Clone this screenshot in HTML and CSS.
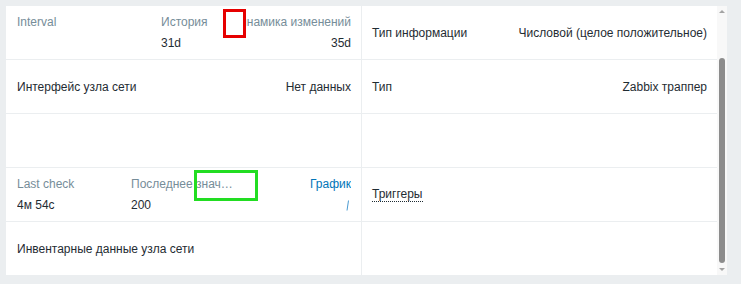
FILE: index.html
```html
<!DOCTYPE html>
<html lang="ru">
<head>
<meta charset="UTF-8">
<meta name="viewport" content="width=device-width, initial-scale=1.0">
<title>Элемент данных</title>
<link rel="stylesheet" href="styles.css">
</head>
<body>
<div class="panel">
    <!-- Таблица свойств элемента -->
    <div class="grid">
        <div class="cell cell-left">
            <div class="trio trio-history">
                <div class="stack">
                    <span class="label">Interval</span>
                    <span class="value">&nbsp;</span>
                </div>
                <div class="stack">
                    <span class="label">История</span>
                    <span class="value">31d</span>
                </div>
                <div class="stack stack-right">
                    <span class="label">Динамика изменений</span>
                    <span class="value">35d</span>
                </div>
            </div>
        </div>
        <div class="cell cell-right pair">
            <span class="value">Тип информации</span>
            <span class="value">Числовой (целое положительное)</span>
        </div>

        <div class="cell cell-left pair">
            <span class="value">Интерфейс узла сети</span>
            <span class="value">Нет данных</span>
        </div>
        <div class="cell cell-right pair">
            <span class="value">Тип</span>
            <span class="value">Zabbix траппер</span>
        </div>

        <div class="cell cell-left"></div>
        <div class="cell cell-right"></div>

        <div class="cell cell-left">
            <div class="trio trio-last">
                <div class="stack">
                    <span class="label">Last check</span>
                    <span class="value">4м 54с</span>
                </div>
                <div class="stack">
                    <span class="label ellipsis">Последнее значение</span>
                    <span class="value">200</span>
                </div>
                <div class="stack stack-right">
                    <a class="link" href="#">График</a>
                    <svg class="spark" width="4" height="11" viewBox="0 0 4 11">
                        <line x1="1" y1="10.5" x2="2.5" y2="0.5" stroke="#4a9ad0" stroke-width="1"/>
                    </svg>
                </div>
            </div>
        </div>
        <div class="cell cell-right pair">
            <span class="value dotted">Триггеры</span>
        </div>

        <div class="cell cell-left pair last">
            <span class="value">Инвентарные данные узла сети</span>
        </div>
        <div class="cell cell-right last"></div>
    </div>

    <!-- Полоса прокрутки -->
    <div class="scrollbar">
        <div class="scroll-btn scroll-up"></div>
        <div class="scroll-gap"></div>
        <div class="scroll-thumb"></div>
        <div class="scroll-rest"></div>
        <div class="scroll-btn scroll-down"></div>
    </div>
</div>

<!-- Пометки поверх скриншота -->
<div class="mark mark-red"></div>
<div class="mark mark-green"></div>
</body>
</html>
```

FILE: styles.css
```css
/* Общие стили */
body {
    margin: 0;
    background-color: #ebeef0;
    font-family: "Liberation Sans", Arial, sans-serif;
    font-size: 12px;
    color: #1f2c33;
}
.panel {
    display: flex;
    width: 721px;
    height: 269px;
    margin: 6px 0 0 6px;
    background-color: #ffffff;
}
/* Таблица */
.grid {
    display: grid;
    grid-template-columns: 356px 355px;
    grid-auto-rows: 54px;
    overflow: hidden;
}
.cell {
    box-sizing: border-box;
    border-bottom: 1px solid #ebeef0;
    display: flex;
    align-items: center;
}
.cell.last {
    border-bottom: none;
}
.cell-left {
    border-right: 1px solid #ebeef0;
    padding: 0 10px 0 11px;
}
.cell-right {
    padding: 0 10px;
}
.pair {
    justify-content: space-between;
    white-space: nowrap;
}
.trio {
    display: grid;
    width: 100%;
    line-height: 21px;
}
.trio-history {
    grid-template-columns: 144px 85px 1fr;
}
.trio-last {
    grid-template-columns: 114px 104px 1fr;
}
.stack {
    display: flex;
    flex-direction: column;
    white-space: nowrap;
    overflow: hidden;
}
.stack-right {
    align-items: flex-end;
}
.label {
    color: #768d99;
}
.ellipsis {
    overflow: hidden;
    text-overflow: ellipsis;
}
.link {
    color: #0275b8;
    text-decoration: none;
}
.spark {
    display: block;
    margin: 5px 1px 0 0;
}
.dotted {
    border-bottom: 1px dotted #1f2c33;
    line-height: 13px;
}
/* Полоса прокрутки */
.scrollbar {
    display: flex;
    flex-direction: column;
    width: 10px;
    background-color: #f8f8f8;
}
.scroll-btn {
    height: 11px;
    display: flex;
    align-items: center;
    justify-content: center;
}
.scroll-up::before {
    content: "";
    border-left: 3px solid transparent;
    border-right: 3px solid transparent;
    border-bottom: 3px solid #a3a3a3;
}
.scroll-down::before {
    content: "";
    border-left: 3px solid transparent;
    border-right: 3px solid transparent;
    border-top: 3px solid #a3a3a3;
}
.scroll-gap {
    height: 41px;
}
.scroll-thumb {
    height: 205px;
    margin: 0 2px;
    background-color: #8c8c8c;
    border-radius: 3px;
}
.scroll-rest {
    flex: 1;
}
/* Пометки */
.mark {
    position: absolute;
    box-sizing: border-box;
}
.mark-red {
    left: 223px;
    top: 9px;
    width: 23px;
    height: 29px;
    border: 3px solid #e60000;
}
.mark-green {
    left: 194px;
    top: 170px;
    width: 64px;
    height: 31px;
    border: 3px solid #22dd22;
}
```
